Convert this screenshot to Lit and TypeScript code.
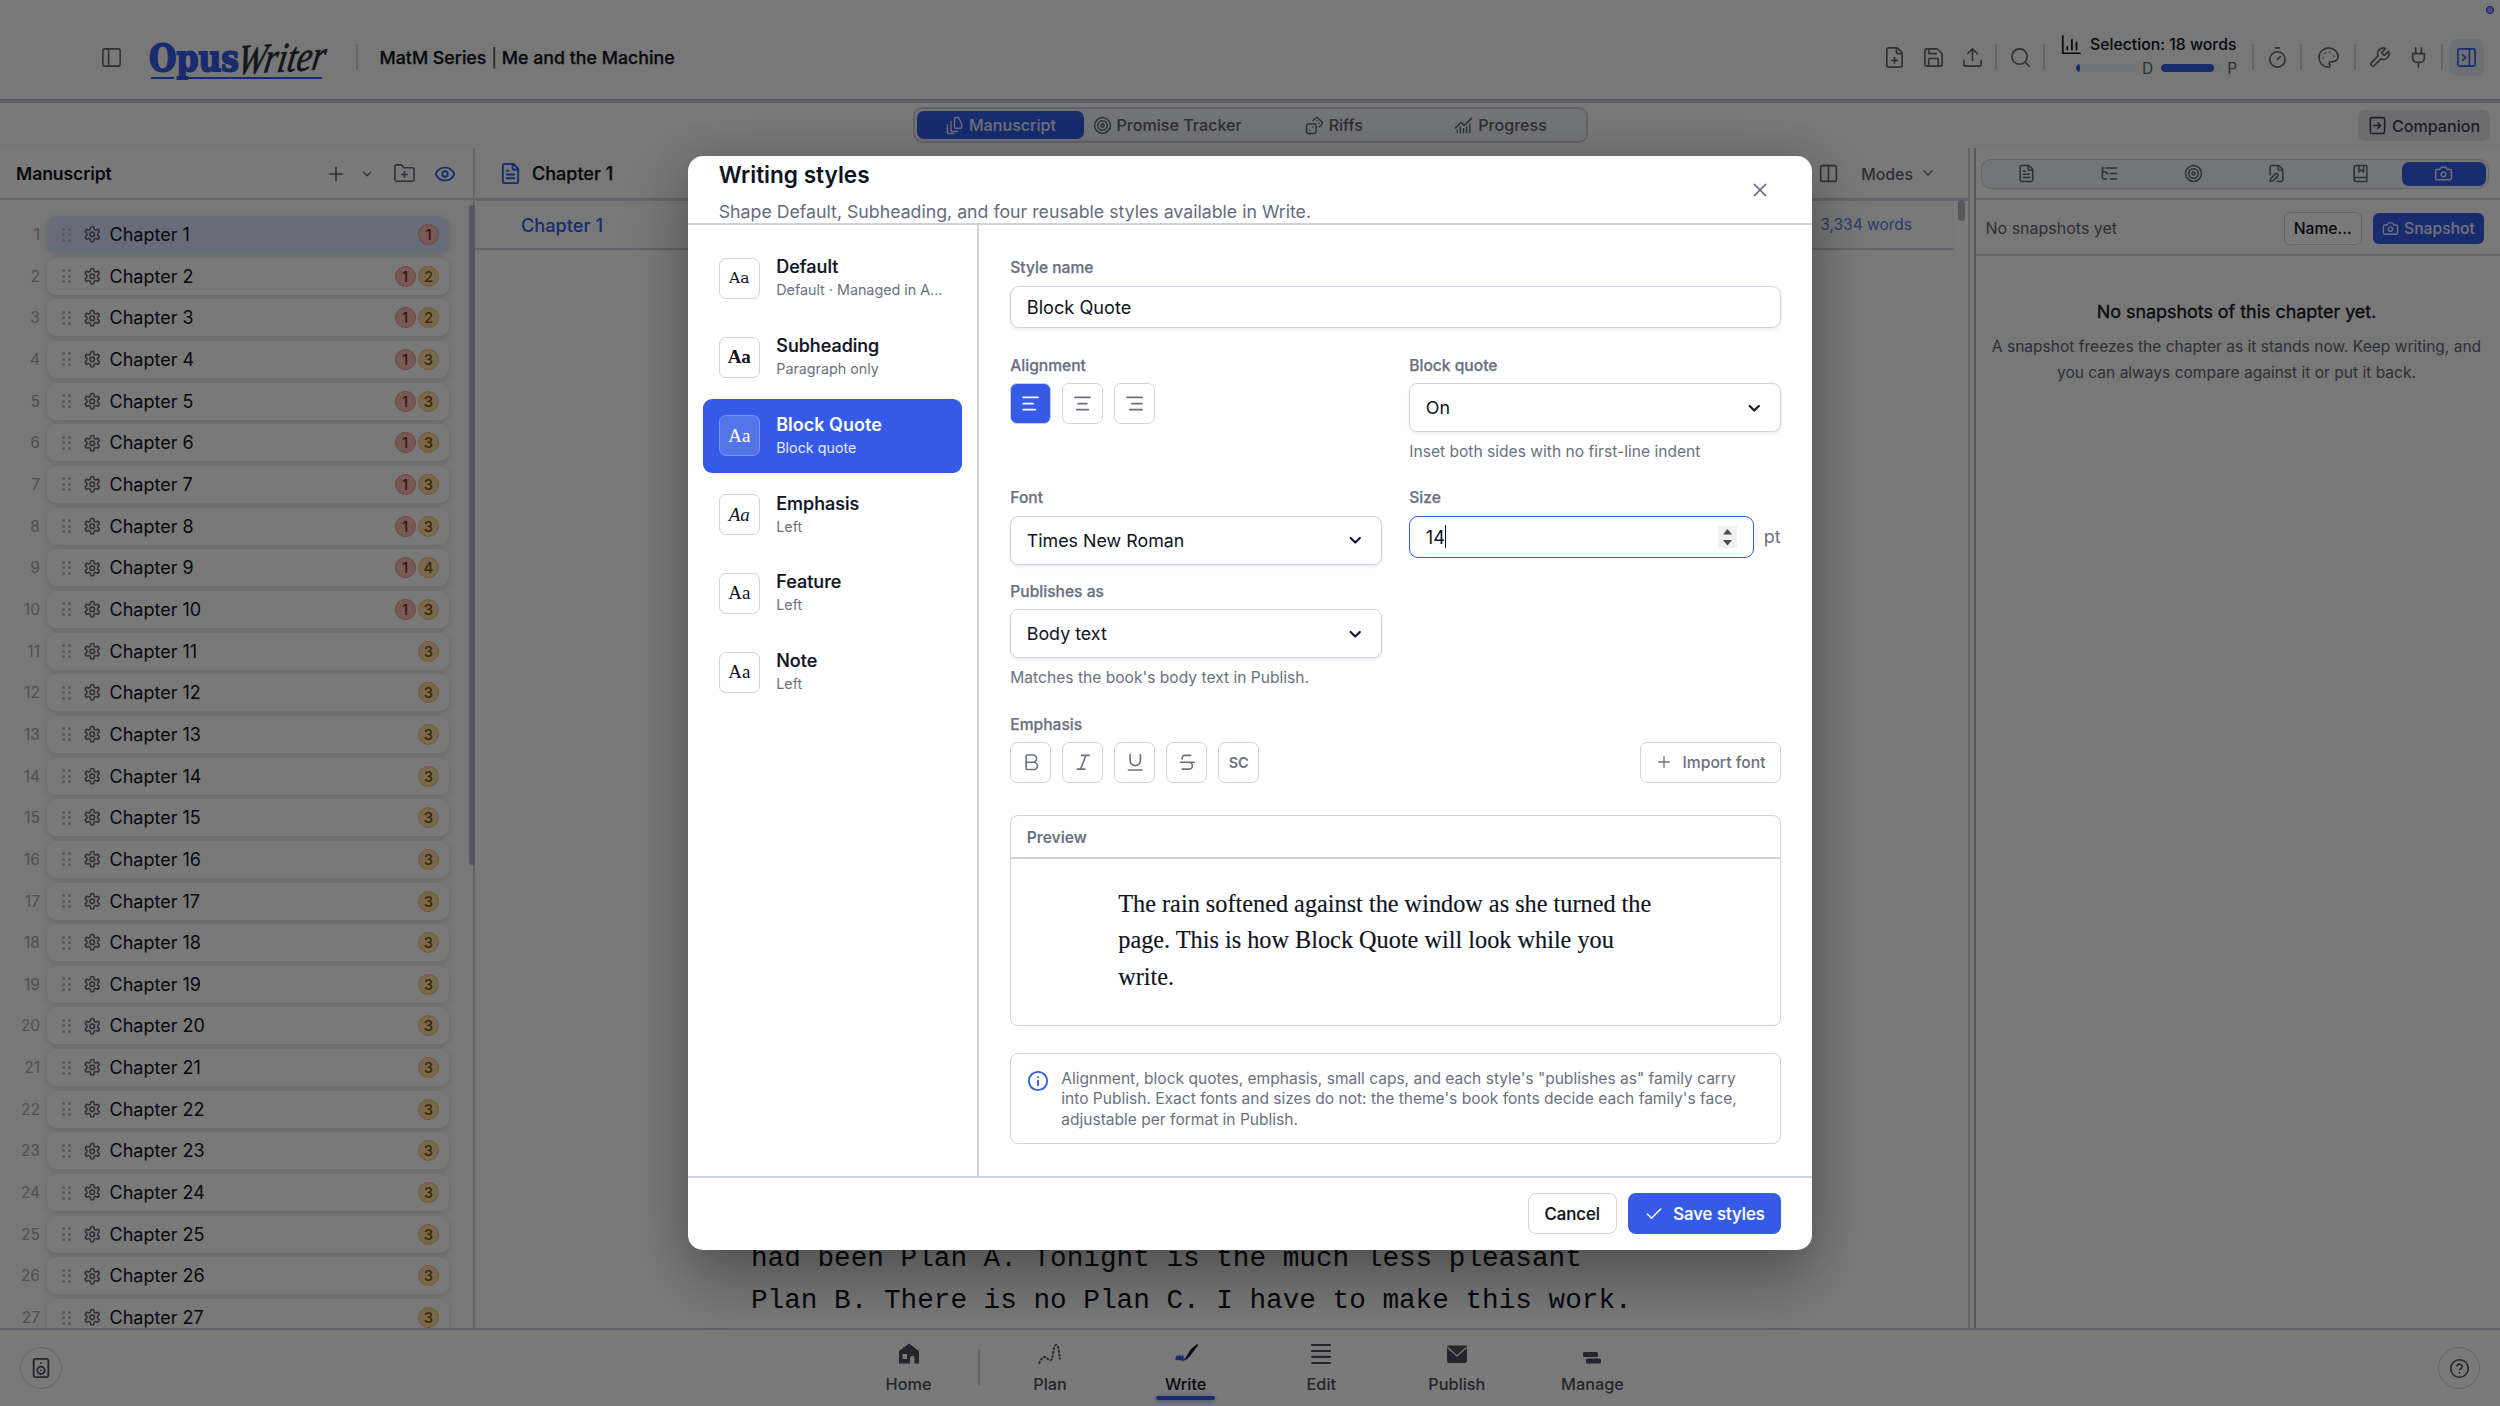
import { LitElement, html, css, svg, nothing } from "lit";
import { customElement } from "lit/decorators.js";
import { classMap } from "lit/directives/class-map.js";

const gear = "M12.22 2h-.44a2 2 0 0 0-2 2v.18a2 2 0 0 1-1 1.73l-.43.25a2 2 0 0 1-2 0l-.15-.08a2 2 0 0 0-2.73.73l-.22.38a2 2 0 0 0 .73 2.73l.15.1a2 2 0 0 1 1 1.72v.51a2 2 0 0 1-1 1.74l-.15.09a2 2 0 0 0-.73 2.73l.22.38a2 2 0 0 0 2.73.73l.15-.08a2 2 0 0 1 2 0l.43.25a2 2 0 0 1 1 1.73V20a2 2 0 0 0 2 2h.44a2 2 0 0 0 2-2v-.18a2 2 0 0 1 1-1.73l.43-.25a2 2 0 0 1 2 0l.15.08a2 2 0 0 0 2.73-.73l.22-.39a2 2 0 0 0-.73-2.73l-.15-.08a2 2 0 0 1-1-1.74v-.5a2 2 0 0 1 1-1.74l.15-.09a2 2 0 0 0 .73-2.73l-.22-.38a2 2 0 0 0-2.73-.73l-.15.08a2 2 0 0 1-2 0l-.43-.25a2 2 0 0 1-1-1.73V4a2 2 0 0 0-2-2zM15 12a3 3 0 1 1-6 0 3 3 0 0 1 6 0z";
const page = "M15 2H6a2 2 0 0 0-2 2v16a2 2 0 0 0 2 2h12a2 2 0 0 0 2-2V7ZM14 2v4a2 2 0 0 0 2 2h4";
const ICONS: Record<string, string> = {
  gear,
  sidebar: "M5 3h14a2 2 0 0 1 2 2v14a2 2 0 0 1-2 2H5a2 2 0 0 1-2-2V5a2 2 0 0 1 2-2zM9 3v18",
  columns: "M5 3h14a2 2 0 0 1 2 2v14a2 2 0 0 1-2 2H5a2 2 0 0 1-2-2V5a2 2 0 0 1 2-2zM12 3v18",
  panelRight: "M5 3h14a2 2 0 0 1 2 2v14a2 2 0 0 1-2 2H5a2 2 0 0 1-2-2V5a2 2 0 0 1 2-2zM15 3v18M8 9l3 3-3 3",
  filePlus: page + "M9 15h6M12 12v6",
  fileText: page + "M10 9H8M16 13H8M16 17H8",
  save: "M15.2 3a2 2 0 0 1 1.4.6l3.8 3.8a2 2 0 0 1 .6 1.4V19a2 2 0 0 1-2 2H5a2 2 0 0 1-2-2V5a2 2 0 0 1 2-2zM17 21v-7a1 1 0 0 0-1-1H8a1 1 0 0 0-1 1v7M7 3v4a1 1 0 0 0 1 1h7",
  upload: "M12 3v12M17 8l-5-5-5 5M21 15v4a2 2 0 0 1-2 2H5a2 2 0 0 1-2-2v-4",
  search: "M19 11a8 8 0 1 1-16 0 8 8 0 0 1 16 0zM21 21l-4.3-4.3",
  chart: "M3 2v19h19M8 17v-3M13 17V6M18 17V9",
  timer: "M10 2h4M12 14l3-3M20 14a8 8 0 1 1-16 0 8 8 0 0 1 16 0z",
  palette: "M12 2C6.5 2 2 6.5 2 12s4.500 10 10 10c.926 0 1.648-.746 1.648-1.688 0-.437-.18-.835-.437-1.125-.29-.289-.438-.652-.438-1.125a1.640 1.640 0 0 1 1.668-1.668h1.996c3.051 0 5.555-2.503 5.555-5.554C21.965 6.012 17.461 2 12 2zM13.500 6.500h.01M17.500 10.500h.01M8.500 7.500h.01M6.500 12.500h.01",
  wrench: "M14.7 6.3a1 1 0 0 0 0 1.4l1.6 1.6a1 1 0 0 0 1.4 0l3.77-3.77a6 6 0 0 1-7.94 7.94l-6.91 6.91a2.12 2.12 0 0 1-3-3l6.91-6.91a6 6 0 0 1 7.94-7.94l-3.76 3.76z",
  plug: "M12 22v-5M9 8V2M15 8V2M18 8v5a4 4 0 0 1-4 4h-4a4 4 0 0 1-4-4V8Z",
  plus: "M5 12h14M12 5v14",
  chevron: "M6 9l6 6 6-6",
  folderPlus: "M12 10v6M9 13h6M20 20a2 2 0 0 0 2-2V8a2 2 0 0 0-2-2h-7.900a2 2 0 0 1-1.690-.9L9.600 3.900A2 2 0 0 0 7.930 3H4a2 2 0 0 0-2 2v13a2 2 0 0 0 2 2Z",
  eye: "M2.06 12.350a1 1 0 0 1 0-.7 10.750 10.750 0 0 1 19.880 0 1 1 0 0 1 0 .7 10.750 10.750 0 0 1-19.880 0M15 12a3 3 0 1 1-6 0 3 3 0 0 1 6 0z",
  stack: "M21 9.500V14a1.500 1.500 0 0 1-1.500 1.500h-6A1.500 1.500 0 0 1 12 14V3.500A1.500 1.500 0 0 1 13.500 2H17zM7.500 7v11A1.500 1.500 0 0 0 9 19.500h7M3 11v9.500A1.500 1.500 0 0 0 4.500 22H11",
  target: "M22 12a10 10 0 1 1-20 0 10 10 0 0 1 20 0zM18 12a6 6 0 1 1-12 0 6 6 0 0 1 12 0zM14 12a2 2 0 1 1-4 0 2 2 0 0 1 4 0z",
  dice: "M4 10h8a2 2 0 0 1 2 2v8a2 2 0 0 1-2 2H4a2 2 0 0 1-2-2v-8a2 2 0 0 1 2-2zM17.920 14l3.500-3.500a2.240 2.240 0 0 0 0-3l-5-4.920a2.240 2.240 0 0 0-3 0L10 6M6 18h.01M10 14h.01M15 6h.01M18 9h.01",
  progress: "M12 16v5M16 14v7M20 10v11M22 3l-8.646 8.646a.5.5 0 0 1-.708 0L9.354 8.354a.5.5 0 0 0-.707 0L2 15M4 18v3M8 14v7",
  companion: "M5 2h14a2 2 0 0 1 2 2v16a2 2 0 0 1-2 2H5a2 2 0 0 1-2-2V4a2 2 0 0 1 2-2zM7 12h9M12.500 8.500L16 12l-3.500 3.500",
  tree: "M21 12h-8M21 5H8M21 19h-8M3 4v4c0 1.100.9 2 2 2h3M3 9v8c0 1.100.9 2 2 2h3M3 5h2M8 12h2",
  filePen: "M12.500 22H18a2 2 0 0 0 2-2V7l-5-5H6a2 2 0 0 0-2 2v9.500M14 2v4a2 2 0 0 0 2 2h4M13.380 15.630a1 1 0 1 0-3.010-3.010l-5.010 5.010a2 2 0 0 0-.51.860l-.84 2.870a.5.5 0 0 0 .62.620l2.870-.84a2 2 0 0 0 .85-.5z",
  book: "M4 19.500v-15A2.500 2.500 0 0 1 6.500 2H19a1 1 0 0 1 1 1v18a1 1 0 0 1-1 1H6.500a2.500 2.500 0 0 1 0-5H20M10 2v8l3-2.500L16 10V2",
  camera: "M14.500 4h-5L7 7H4a2 2 0 0 0-2 2v9a2 2 0 0 0 2 2h16a2 2 0 0 0 2-2V9a2 2 0 0 0-2-2h-3zM15 13a3 3 0 1 1-6 0 3 3 0 0 1 6 0z",
  close: "M18 6L6 18M6 6l12 12",
  alignLeft: "M3.500 5h17M3.500 12h11.500M3.500 19h14",
  alignCenter: "M3.500 5h17M7 12h10M5.500 19h13",
  alignRight: "M3.500 5h17M9 12h11.500M6.500 19h14",
  bold: "M6 12h9a4 4 0 0 1 0 8.500H7a1 1 0 0 1-1-1v-15a1 1 0 0 1 1-1h7a4 4 0 0 1 0 8.500",
  italic: "M19 4h-9M14 20H5M15 4L9 20",
  underline: "M6 3v7a6 6 0 0 0 12 0V3M4 21h16",
  strike: "M16 4H9a3 3 0 0 0-2.830 4M14 12a4 4 0 0 1 0 8H6M4 12h16",
  info: "M22 12a10 10 0 1 1-20 0 10 10 0 0 1 20 0zM12 16.500v-5M12 7.800h.01",
  check: "M20 6L9 17l-5-5",
  speaker: "M6 2h12a2 2 0 0 1 2 2v16a2 2 0 0 1-2 2H6a2 2 0 0 1-2-2V4a2 2 0 0 1 2-2zM12 6.500h.01M16 14.500a4 4 0 1 1-8 0 4 4 0 0 1 8 0zM12 14.500h.01",
  help: "M22 12a10 10 0 1 1-20 0 10 10 0 0 1 20 0zM9.090 9a3 3 0 0 1 5.830 1c0 2-3 3-3 3M12 17h.01",
};

const icon = (name: string, size = 23, stroke = 1.7) => html`<svg width=${size} height=${size} viewBox="0 0 24 24"
  fill="none" stroke="currentColor" stroke-width=${stroke} stroke-linecap="round" stroke-linejoin="round"><path d=${ICONS[name]}></path></svg>`;

const NAV_ART: Record<string, unknown> = {
  Home: svg`<path fill="currentColor" fill-rule="evenodd" d="M12 1.500L22 9v12.500h-4.500V16a2.200 2.200 0 0 0-4.400 0v5.500H2V9zM5.500 12v5h4.500v-5z"/>`,
  Plan: svg`<path fill="none" stroke="currentColor" stroke-width="1.800" stroke-dasharray="2.800 1.100" d="M1 22c1.500-4 3.500-7 5.500-7s4 3.500 6 3.300c3-.3 2.500-15.300 5.500-15.300 3 0 3 8 4 14.500"/>`,
  Write: svg`<path fill="#345ae6" d="M1 17l2-4 1 1.500 2-2 1 2 2-1.500 1 2.500-1.500 3.500-2-1-1 1-1.500-1.500-1.500 1z"/><path fill="currentColor" d="M23 2.300c1.200-.6 1.300.6.5 1.700l-7 9.500-5.500 5.500 1-4 5-8z"/><path fill="none" stroke="#345ae6" stroke-width="1.600" d="M8.500 19l3-3"/>`,
  Edit: svg`<path fill="none" stroke="currentColor" stroke-width="2.200" stroke-linecap="round" d="M3 3h18M3 9h18M3 14.800h18M3 21h18"/>`,
  Publish: svg`<rect x="2" y="3.500" width="20" height="17.500" rx="2" fill="currentColor"/><path fill="none" stroke="#fff" stroke-width="1.300" d="M2.500 5.500l9.500 8.500 9.500-8.500"/>`,
  Manage: svg`<rect x="3" y="10" width="15" height="5" rx="1.500" fill="currentColor"/><rect x="6" y="16.500" width="15" height="5" rx="1.500" fill="currentColor"/>`,
};

const CHAPTERS = Array.from({ length: 27 }, (_, i) => ({
  n: i + 1,
  red: i < 10,
  amber: i === 0 ? 0 : i < 3 ? 2 : i === 8 ? 4 : 3,
}));

const STYLES = [
  { name: "Default", note: "Default · Managed in A...", face: "mono" },
  { name: "Subheading", note: "Paragraph only", face: "strong" },
  { name: "Block Quote", note: "Block quote", face: "plain", on: true },
  { name: "Emphasis", note: "Left", face: "slant" },
  { name: "Feature", note: "Left", face: "plain" },
  { name: "Note", note: "Left", face: "plain" },
];

const base = css`
  * { box-sizing: border-box; }
  svg { display: block; flex: none; }
  .row { display: flex; align-items: center; }
`;

@customElement("app-header")
class AppHeader extends LitElement {
  static styles = [base, css`
    :host { display: flex; height: 99px; align-items: center; padding: 15px 16px 0 100px; color: #5e6370; position: relative; }
    .logo { margin: 1px 0 0 19px; overflow: visible; }
    .rule { width: 2px; height: 26px; background: #d0d3da; margin: 0 5px; flex: none; }
    .title { margin-left: 16.500px; font-size: 17.800px; font-weight: 500; color: #10131f; white-space: nowrap; -webkit-text-stroke: .25px #10131f; }
    .title i { font-style: normal; font-weight: 400; color: #5e6370; }
    .tools { margin-left: auto; }
    .tool { width: 36px; height: 37px; display: flex; align-items: center; justify-content: center; margin-right: 3px; }
    .end { margin-right: 0; }
    .on { background: #e9ebf2; border-radius: 7px; color: #345ae6; margin: 0 0 0 1px; width: 35px; }
    .stats { width: 197px; padding: 0 9px 0 10px; height: 44px; margin-top: -2px; color: #10131f; }
    .top { gap: 8px; height: 21px; font-size: 15.800px; font-weight: 500; white-space: nowrap; }
    .bars { margin: 6px 0 0 16px; font-size: 15.500px; color: #5e6370; height: 14px; }
    .bar { width: 63px; height: 8px; border-radius: 4px; background: #f1f2f7; overflow: hidden; }
    .fill { height: 8px; border-radius: 4px; background: #345ae6; }
    .cap { margin: 0 8px 0 4px; width: 11px; }
    .dot { position: absolute; right: 6px; top: 6px; width: 8px; height: 8px; border-radius: 50%; background: #a79bff; border: 1.500px solid #1b2fd0; }
  `];
  render() {
    return html`
      ${icon("sidebar", 23, 1.6)}
      <svg class="logo" width="192" height="72" viewBox="-4 -10 192 72">
        <text x="3" y="38.500" textLength="90" lengthAdjust="spacingAndGlyphs" font-family="DejaVu Serif, serif" font-weight="bold" font-size="37" fill="#345ae6" stroke="#345ae6" stroke-width="1.800">Opus</text>
        <path d="M5 46h23M42 46h134" stroke="#345ae6" stroke-width="2"></path>
        <text textLength="88" lengthAdjust="spacingAndGlyphs" font-family="Liberation Serif, serif" font-style="italic" font-size="42" fill="#2b2e38" stroke="#2b2e38" stroke-width=".7" transform="translate(90 42) rotate(-3) skewX(-12)">Writer</text>
      </svg>
      <div class="rule" style="margin-left:22px"></div>
      <div class="title">MatM Series <i>|</i> Me and the Machine</div>
      <div class="tools row">
        <div class="tool">${icon("filePlus")}</div><div class="tool">${icon("save")}</div><div class="tool end">${icon("upload")}</div>
        <div class="rule"></div><div class="tool end">${icon("search")}</div><div class="rule"></div>
        <div class="stats">
          <div class="top row">${icon("chart", 22, 1.9)}<span>Selection: 18 words</span></div>
          <div class="bars row">
            <div class="bar"><div class="fill" style="width:4px"></div></div><span class="cap">D</span>
            <div class="bar"><div class="fill" style="width:53px"></div></div><span class="cap" style="margin-right:0">P</span>
          </div>
        </div>
        <div class="rule"></div><div class="tool end">${icon("timer")}</div><div class="rule" style="margin-right:8px"></div>
        <div class="tool">${icon("palette")}</div>
        <div class="rule"></div><div class="tool">${icon("wrench")}</div><div class="tool end">${icon("plug")}</div><div class="rule"></div>
        <div class="tool on">${icon("panelRight")}</div>
      </div>
      <div class="dot"></div>`;
  }
}

@customElement("chapter-list")
class ChapterList extends LitElement {
  static styles = [base, css`
    :host { display: flex; flex-direction: column; width: 475px; border-right: 2px solid #cfd0dc; background: #f8fbf8; position: relative; }
    .head { height: 52px; flex: none; background: #fff; border-bottom: 2px solid #d5d6df; padding: 1px 17px 0 16px; color: #5e6370; }
    h2 { margin: 0 auto 0 0; font-size: 17.600px; font-weight: 600; color: #10131f; letter-spacing: -.1px; }
    .head svg + svg { margin-left: 13px; }
    .head svg + svg + svg { margin-left: 19px; }
    .blue { color: #345ae6; margin-left: 18px; }
    .list { padding: 16px 24px 0 0; overflow: hidden; display: grid; grid-auto-rows: 37px; row-gap: 4.670px; }
    .item { display: grid; grid-template-columns: 40px 1fr; column-gap: 7px; align-items: center; }
    .num { text-align: right; font-size: 15.600px; color: #a3a6ae; }
    .card { height: 37px; border-radius: 9px; padding: 0 10px 0 15px; display: flex; align-items: center; font-size: 18px; color: #10131f; background: #fafcfa; box-shadow: 0 2px 6px rgba(30, 30, 50, .15); }
    .sel { background: #d6e2fb; }
    .grip { display: grid; grid-template-columns: 3px 3px; gap: 2.500px; margin-right: 12px; }
    .grip i { width: 3px; height: 3px; border-radius: 50%; background: #b6b9c2; }
    .gear { color: #5e6370; margin-right: 8.500px; }
    .name { margin-right: auto; }
    .badge { width: 21px; height: 21px; border-radius: 50%; border: 1.500px solid #ef8680; background: #f5bdb8; color: #8e1b1b; display: flex; align-items: center; justify-content: center; font-size: 15px; font-weight: 500; margin-left: 2.500px; }
    .amber { border-color: #f0ba58; background: #f7dca6; color: #855005; }
    .thumb { position: absolute; left: 469px; top: 57px; width: 7px; height: 660px; border-radius: 4px; background: #b4b5c0; }
  `];
  render() {
    return html`
      <div class="head row"><h2>Manuscript</h2>${icon("plus", 22)}${icon("chevron", 14, 2.2)}${icon("folderPlus", 23, 1.6)}<span class="blue">${icon("eye", 22, 2)}</span></div>
      <div class="list">
        ${CHAPTERS.map((c) => html`<div class="item"><span class="num">${c.n}</span>
          <div class=${classMap({ card: true, sel: c.n === 1 })}>
            <span class="grip">${[0, 1, 2, 3, 4, 5].map(() => html`<i></i>`)}</span>
            <span class="gear">${icon("gear", 18.500, 2)}</span><span class="name">Chapter ${c.n}</span>
            ${c.red ? html`<span class="badge">1</span>` : nothing}
            ${c.amber ? html`<span class="badge amber">${c.amber}</span>` : nothing}
          </div></div>`)}
      </div>
      <div class="thumb"></div>`;
  }
}

@customElement("chapter-editor")
class ChapterEditor extends LitElement {
  static styles = [base, css`
    :host { display: flex; flex-direction: column; flex: 1; background: #fff; position: relative; overflow: hidden; }
    .head { height: 53px; flex: none; background: #f8fbf8; border-bottom: 3px solid #cfd0dc; padding: 0 32px 0 24px; color: #5e6370; }
    .blue { color: #345ae6; }
    h2 { margin: 0 auto 0 10px; font-size: 18px; font-weight: 500; color: #10131f; -webkit-text-stroke: .25px #10131f; }
    .modes { font-size: 15.900px; font-weight: 500; margin: 2px 7px 0 22px; }
    .sub { height: 49px; width: 1479px; flex: none; background: #f8fbf8; border-bottom: 2px solid #cfd0dc; padding: 0 42px 0 46px; justify-content: space-between; font-size: 18.200px; font-weight: 500; color: #345ae6; }
    .words { font-size: 15.500px; font-weight: 400; opacity: .8; }
    .text { margin: auto 0 0 276px; padding-bottom: 6.500px; font: 27.700px/41.670px "Liberation Mono", monospace; color: #10131f; white-space: pre; }
    .thumb { position: absolute; right: 3px; top: 52px; width: 7px; height: 21px; border-radius: 4px; background: #b4b5c0; }
  `];
  render() {
    return html`
      <div class="head row"><span class="blue">${icon("fileText", 23, 2)}</span><h2>Chapter 1</h2>${icon("columns", 21, 1.8)}<span class="modes">Modes</span>${icon("chevron", 16, 2)}</div>
      <div class="sub row"><span>Chapter 1</span><span class="words">3,334 words</span></div>
      <div class="text">had been Plan A. Tonight is the much less pleasant
Plan B. There is no Plan C. I have to make this work.</div>
      <div class="thumb"></div>`;
  }
}

@customElement("snapshot-panel")
class SnapshotPanel extends LitElement {
  static styles = [base, css`
    :host { display: flex; flex-direction: column; width: 532px; border-left: 2px solid #cfd0dc; background: #f8fbf8; padding-left: 4px; }
    .body { flex: 1; border-left: 2px solid #b9bac6; }
    .head { height: 52px; background: #fff; border-bottom: 2px solid #d5d6df; padding: 10.500px 11px 9px 5px; }
    .pill { height: 30.500px; border: 1.500px solid #cfd0dc; border-radius: 10px; background: #f3f4f8; padding: 2.500px; display: grid; grid-template-columns: repeat(6, 1fr); }
    .tab { display: flex; align-items: center; justify-content: center; color: #5e6370; border-radius: 7px; }
    .on { background: #345ae6; color: #e8ecff; }
    .bar { height: 56px; border-bottom: 2px solid #d5d6df; padding: 2px 16px 0 9.500px; font-size: 16px; color: #5e6370; }
    .bar span { margin-right: auto; }
    .btn { width: 78.500px; height: 33px; border-radius: 6px; border: 1.500px solid #cfd0dc; background: #fff; color: #10131f; font-weight: 500; font-size: 15.700px; display: flex; align-items: center; justify-content: center; gap: 5px; }
    .fill { width: 111px; height: 31px; background: #345ae6; color: #e8ecff; border: 0; margin-left: 11px; }
    .empty { text-align: center; padding: 41px 3px 0 0; }
    h3 { margin: 0; font-size: 17.900px; line-height: 30px; font-weight: 400; color: #10131f; -webkit-text-stroke: .3px #10131f; }
    p { margin: 7px 0 0; font-size: 15.550px; line-height: 25.500px; color: #5e6370; white-space: nowrap; }
  `];
  render() {
    return html`<div class="body">
      <div class="head"><div class="pill">${["fileText", "tree", "target", "filePen", "book", "camera"].map((n) => html`<div class=${classMap({ tab: true, on: n === "camera" })}>${icon(n, 19, 1.9)}</div>`)}</div></div>
      <div class="bar row"><span>No snapshots yet</span><div class="btn">Name...</div><div class="btn fill">${icon("camera", 17, 2)}Snapshot</div></div>
      <div class="empty"><h3>No snapshots of this chapter yet.</h3><p>A snapshot freezes the chapter as it stands now. Keep writing, and<br />you can always compare against it or put it back.</p></div>
    </div>`;
  }
}

@customElement("style-dialog")
class StyleDialog extends LitElement {
  static styles = [base, css`
    :host { display: grid; grid-template-rows: 69px 950.500px 74px; width: 1124.500px; height: 1093.500px; border-radius: 15px; background: #fff; overflow: hidden; color: #0e1322; box-shadow: 0 30px 65px rgba(0, 0, 0, .3), 0 0 40px rgba(0, 0, 0, .1); }
    header { display: flex; justify-content: space-between; padding: 5px 41px 0 31px; border-bottom: 2px solid #cfd3dd; }
    h1 { margin: 0; font-size: 22.600px; line-height: 28px; font-weight: 600; }
    .lead { margin: 8.500px 0 0; font-size: 17.730px; line-height: 28px; color: #666c7c; white-space: nowrap; }
    .x { color: #5b6274; margin-top: 18px; }
    main { display: grid; grid-template-columns: 291.500px 1fr; }
    nav { border-right: 2px solid #cfd3dd; padding: 16px 15px; display: grid; grid-auto-rows: 74px; row-gap: 4.750px; align-content: start; }
    .item { border-radius: 9px; padding: 0 16px; display: grid; grid-template-columns: 41px 1fr; column-gap: 16.500px; align-items: center; }
    .face { width: 41px; height: 41px; border: 1.500px solid #cfd3dd; border-radius: 7px; display: flex; align-items: center; justify-content: center; font: 19px "Liberation Serif", serif; }
    .mono { font: 15.500px "DejaVu Serif", serif; }
    .strong { font-weight: 700; }
    .slant { font-style: italic; }
    .name { font-size: 18px; line-height: 23px; font-weight: 500; -webkit-text-stroke: .2px; }
    .note { font-size: 14.300px; line-height: 23px; color: #6b7180; white-space: nowrap; }
    .on { background: #345ae6; color: #fff; }
    .on .name { font-weight: 600; -webkit-text-stroke: 0; }
    .on .note { color: #e3e9ff; }
    .on .face { background: #5474ea; border-color: #7c95ef; }
    .form { padding: 32px 31px 0; }
    .label, .hint { display: block; height: 20px; line-height: 21.500px; font-size: 15.600px; font-weight: 500; color: #6b7180; white-space: nowrap; -webkit-text-stroke: .25px; }
    .hint { font-weight: 400; -webkit-text-stroke: 0; margin-top: 9px; }
    .box { margin-top: 8.500px; height: 42px; border: 1.500px solid #cfd3dd; border-radius: 9px; display: flex; align-items: center; padding: 0 15.500px; font-size: 18.200px; box-shadow: 0 1.500px 3px rgba(20, 25, 50, .08); }
    .select { height: 49px; margin-bottom: -.5px; justify-content: space-between; padding-right: 17px; border-radius: 8px; font-size: 17.850px; }
    .two { display: grid; grid-template-columns: 372px 372px; justify-content: space-between; }
    .btns { display: flex; gap: 11px; margin-top: 8px; }
    .sq { width: 41px; height: 41px; border: 1.500px solid #cfd3dd; border-radius: 7px; display: flex; align-items: center; justify-content: center; color: #6b7180; font-size: 14.500px; font-weight: 600; }
    .act { background: #345ae6; color: #fff; border-color: #c3cdf5; }
    .focus { border-color: #345ae6; width: 344.500px; box-shadow: none; padding-right: 16px; }
    .caret { width: 1.500px; height: 23px; background: #0e1322; margin-right: auto; }
    .spin { width: 19px; height: 22px; background: #f0f0f0; color: #4a4a4a; }
    .pt { font-size: 18px; color: #6b7180; margin: 7px 0 0 10px; }
    .import { margin-left: auto; width: 141.500px; gap: 9px; font-size: 15.700px; font-weight: 500; white-space: nowrap; }
    .preview { margin-top: 32px; height: 211px; border: 1.500px solid #cfd3dd; border-radius: 8px; }
    .ph { height: 43px; line-height: 43px; padding-left: 15.500px; border-bottom: 2px solid #cfd3dd; font-size: 15.600px; font-weight: 600; color: #6b7180; }
    .quote { margin: 27px 0 0 107px; font: 24.270px/36.500px "Liberation Serif", serif; white-space: nowrap; -webkit-text-stroke: .15px; }
    .info { margin-top: 27px; height: 91px; border: 1.500px solid #cfd3dd; border-radius: 8px; display: flex; padding: 15px 15.500px; gap: 12.500px; font-size: 15.550px; line-height: 20.700px; color: #6b7180; white-space: nowrap; }
    .info svg { color: #345ae6; margin-top: 1px; }
    footer { border-top: 2px solid #cfd3dd; display: flex; justify-content: flex-end; gap: 11px; padding: 15px 31px 0; }
    .btn { height: 41.500px; border: 1.500px solid #cfd3dd; border-radius: 8px; width: 89px; display: flex; align-items: center; justify-content: center; gap: 9px; font-size: 16.800px; font-weight: 500; white-space: nowrap; -webkit-text-stroke: .2px; }
    .primary { background: #345ae6; color: #fff; width: 153.500px; border: 0; }
  `];
  private select(label: string, value: string, hint?: string) {
    return html`<div><span class="label">${label}</span><div class="box select">${value}${icon("chevron", 18.500, 2.6)}</div>${hint ? html`<span class="hint">${hint}</span>` : nothing}</div>`;
  }
  render() {
    return html`
      <header><div><h1>Writing styles</h1><p class="lead">Shape Default, Subheading, and four reusable styles available in Write.</p></div><span class="x">${icon("close", 22, 1.8)}</span></header>
      <main>
        <nav>${STYLES.map((s) => html`<div class=${classMap({ item: true, on: !!s.on })}><div class="face ${s.face}">Aa</div><div><div class="name">${s.name}</div><div class="note">${s.note}</div></div></div>`)}</nav>
        <div class="form">
          <span class="label">Style name</span>
          <div class="box">Block Quote</div>
          <div class="two" style="margin-top:27px">
            <div><span class="label">Alignment</span><div class="btns"><div class="sq act">${icon("alignLeft", 21, 2)}</div><div class="sq">${icon("alignCenter", 21, 2)}</div><div class="sq">${icon("alignRight", 21, 2)}</div></div></div>
            ${this.select("Block quote", "On", "Inset both sides with no first-line indent")}
          </div>
          <div class="two" style="margin-top:26.500px">
            ${this.select("Font", "Times New Roman")}
            <div><span class="label">Size</span><div class="row"><div class="box focus">14<span class="caret"></span>
              <svg class="spin" viewBox="0 0 19 22"><path fill="currentColor" d="M5 8.500L9.500 3 14 8.500zM5 14h9l-4.500 5.500z"></path></svg></div><span class="pt">pt</span></div></div>
          </div>
          <div class="two" style="margin-top:16.500px">${this.select("Publishes as", "Body text", "Matches the book's body text in Publish.")}</div>
          <span class="label" style="margin-top:27px">Emphasis</span>
          <div class="btns">${["bold", "italic", "underline", "strike"].map((n) => html`<div class="sq">${icon(n, 20.500, 1.9)}</div>`)}<div class="sq">SC</div><div class="sq import">${icon("plus", 18, 1.8)}Import font</div></div>
          <div class="preview"><div class="ph">Preview</div><div class="quote">The rain softened against the window as she turned the<br />page. This is how Block Quote will look while you<br />write.</div></div>
          <div class="info">${icon("info", 22, 2)}<span>Alignment, block quotes, emphasis, small caps, and each style's "publishes as" family carry<br />into Publish. Exact fonts and sizes do not: the theme's book fonts decide each family's face,<br />adjustable per format in Publish.</span></div>
        </div>
      </main>
      <footer><div class="btn">Cancel</div><div class="btn primary">${icon("check", 20, 1.8)}Save styles</div></footer>`;
  }
}

@customElement("app-root")
class AppRoot extends LitElement {
  static styles = [base, css`
    :host { display: block; position: relative; width: 2500px; height: 1406px; overflow: hidden; font-family: Inter, "Liberation Sans", sans-serif; background: #f8fbf8; }
    .page { display: flex; flex-direction: column; height: 1406px; }
    .band { height: 4px; background: #cfd0d8; border-top: 1px solid #aeb0ba; border-bottom: 1px solid #c6c7d6; flex: none; }
    .tabs { height: 45px; flex: none; display: grid; grid-template-columns: 1fr auto 1fr; padding: 0 10px 0 11px; align-items: center; }
    .group { display: grid; grid-template-columns: repeat(4, 166.700px); border: 2px solid #cfd0d8; border-radius: 9px; padding: 2px; height: 36px; margin-top: -1px; background: #f1f2f5; }
    .tab { display: flex; align-items: center; justify-content: center; gap: 5px; font-size: 16.100px; font-weight: 500; color: #5e6370; border-radius: 7px; white-space: nowrap; }
    .on { background: #345ae6; color: #e8ecff; }
    .companion { justify-self: end; width: 132px; height: 31px; background: #e3e4e9; color: #3b3f4b; }
    .work { flex: 1; min-height: 0; display: flex; }
    .bottom { height: 78px; flex: none; background: #fff; border-top: 2px solid #cfd0dc; display: flex; justify-content: space-between; padding: 0 20px; align-items: center; color: #4a4e5b; }
    .round { width: 42px; height: 42px; border-radius: 50%; border: 1.500px solid #d0d2da; display: flex; align-items: center; justify-content: center; }
    .nav { display: flex; height: 76px; margin-left: 1px; }
    .go { width: 135.600px; display: flex; flex-direction: column; align-items: center; padding-top: 12px; gap: 7px; font-size: 16.300px; line-height: 22px; font-weight: 500; }
    .go::after { content: ""; width: 59px; height: 4px; border-radius: 2px; margin-top: -6px; }
    .now { color: #10131f; }
    .now::after { background: #345ae6; box-shadow: 0 1px 5px rgba(52, 90, 230, .6); }
    .split { width: 2px; height: 36px; background: #cfd0dc; margin: 19px 2px 0 2px; }
    .veil { position: absolute; inset: 0; background: rgba(0, 0, 0, .52); display: flex; align-items: center; justify-content: center; }
  `];
  render() {
    const tabs = [["stack", "Manuscript"], ["target", "Promise Tracker"], ["dice", "Riffs"], ["progress", "Progress"]];
    const item = (n: string) => html`<div class=${classMap({ go: true, now: n === "Write" })}><svg width="24" height="24" viewBox="0 0 24 24">${NAV_ART[n]}</svg>${n}</div>`;
    return html`
      <div class="page">
        <app-header></app-header>
        <div class="band"></div>
        <div class="tabs"><span></span>
          <div class="group">${tabs.map(([i, t], k) => html`<div class=${classMap({ tab: true, on: k === 0 })}>${icon(i, 19, 1.8)}${t}</div>`)}</div>
          <div class="tab companion">${icon("companion", 19, 2)}Companion</div>
        </div>
        <div class="work"><chapter-list></chapter-list><chapter-editor></chapter-editor><snapshot-panel></snapshot-panel></div>
        <div class="bottom">
          <div class="round">${icon("speaker", 22, 2)}</div>
          <div class="nav">${item("Home")}<div class="split"></div>${["Plan", "Write", "Edit", "Publish", "Manage"].map(item)}</div>
          <div class="round">${icon("help", 21, 1.8)}</div>
        </div>
      </div>
      <div class="veil"><style-dialog></style-dialog></div>`;
  }
}
